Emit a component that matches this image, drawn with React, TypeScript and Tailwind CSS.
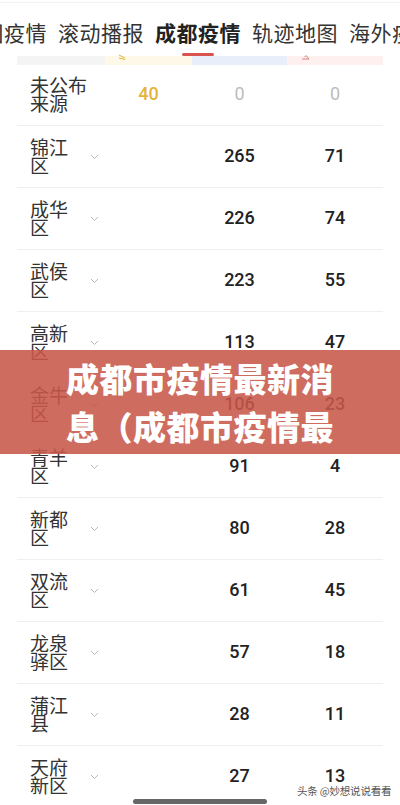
import React from "react";

const rows: { l1: string; l2: string; a?: string; b: string; c: string; chev: boolean }[] = [
  { l1: "未公布", l2: "来源", a: "40", b: "0", c: "0", chev: false },
  { l1: "锦江", l2: "区", b: "265", c: "71", chev: true },
  { l1: "成华", l2: "区", b: "226", c: "74", chev: true },
  { l1: "武侯", l2: "区", b: "223", c: "55", chev: true },
  { l1: "高新", l2: "区", b: "113", c: "47", chev: true },
  { l1: "金牛", l2: "区", b: "106", c: "23", chev: true },
  { l1: "青羊", l2: "区", b: "91", c: "4", chev: true },
  { l1: "新都", l2: "区", b: "80", c: "28", chev: true },
  { l1: "双流", l2: "区", b: "61", c: "45", chev: true },
  { l1: "龙泉", l2: "驿区", b: "57", c: "18", chev: true },
  { l1: "蒲江", l2: "县", b: "28", c: "11", chev: true },
  { l1: "天府", l2: "新区", b: "27", c: "13", chev: true },
];

const cjk = { fontFamily: '"Noto Sans CJK SC", "Noto Sans", sans-serif' };
const num = { fontFamily: 'Roboto, "Noto Sans", sans-serif' };

function Chevron() {
  return (
    <svg width="9" height="6" viewBox="0 0 9 6" fill="none">
      <path d="M1 1l3.5 3.5L8 1" stroke="#b8b8b8" strokeWidth="1" />
    </svg>
  );
}

export default function App() {
  return (
    <div className="relative w-[400px] h-[805px] overflow-hidden bg-white" style={cjk}>
      <div className="h-[2px]" />
      <div className="h-px bg-[#f2f2f2]" />
      {/* tabs */}
      <div className="relative h-[53px] pt-[6px] flex items-center gap-[11px] -ml-[39px] whitespace-nowrap text-[21px] tracking-[0.5px] text-[#333]">
        <span>全国疫情</span>
        <span>滚动播报</span>
        <span className="relative font-bold text-[#222]">
          成都疫情
          <span className="absolute left-[27px] top-[36px] w-[32px] h-[3px] rounded-full bg-[#d9534f]" />
        </span>
        <span>轨迹地图</span>
        <span>海外疫情</span>
      </div>
      {/* header bands */}
      <div className="mx-[17px] flex h-[9px]">
        <div className="w-[88px] bg-[#f4f4f4]" />
        <div className="w-[87px] bg-[#fdf8e8] relative">
          <svg className="absolute left-[13px] -top-[2px]" width="9" height="6" viewBox="0 0 9 6">
            <path d="M1 1l6 3M1 4l6 1.5" stroke="#e0b43a" strokeWidth="1" fill="none" />
          </svg>
        </div>
        <div className="w-[95px] bg-[#e8effb]" />
        <div className="w-[96px] bg-[#fdf0ef] relative">
          <svg className="absolute left-[14px] -top-[2px]" width="9" height="6" viewBox="0 0 9 6">
            <path d="M1 5h7L5 1.5 3.5 3" stroke="#d9837a" strokeWidth="1" fill="none" />
          </svg>
        </div>
      </div>
      {/* rows */}
      <div className="mx-[17px]">
        {rows.map((r, i) => (
          <div
            key={i}
            className={`flex items-center ${i === 0 ? "h-[61px]" : "h-[62px]"} border-b border-[#efefef]`}
          >
            <div className="w-[88px] flex items-center pl-[13px]">
              <div className="w-[60px] text-[19px] leading-[18px] text-[#333] -mt-[2px]">
                <div>{r.l1}</div>
                <div>{r.l2}</div>
              </div>
              {r.chev && <Chevron />}
            </div>
            <div className="w-[87px] text-center text-[18px] font-medium text-[#e3b33e] -mt-[3px]" style={num}>
              {r.a ?? ""}
            </div>
            <div
              className={`w-[95px] text-center text-[18px] -mt-[2px] ${r.a ? "text-[#bdbdbd] -mt-[3px]" : "font-medium text-[#222]"}`}
              style={num}
            >
              {r.b}
            </div>
            <div
              className={`w-[96px] text-center text-[18px] -mt-[2px] ${r.a ? "text-[#bdbdbd] -mt-[3px]" : "font-medium text-[#222]"}`}
              style={num}
            >
              {r.c}
            </div>
          </div>
        ))}
      </div>
      {/* banner overlay */}
      <div className="absolute left-0 top-[350px] w-[400px] h-[104px] bg-[#c8584a]/[0.88] py-[4px] pl-[66px]">
        <div className="w-[274px] h-[96px] overflow-hidden text-white font-black text-[33px] leading-[48px] tracking-[0.5px]">
          成都市疫情最新消息（成都市疫情最新消息今天）
        </div>
      </div>
      {/* watermark */}
      <div
        className="absolute left-[297px] top-[783px] text-[10.5px] tracking-[-0.2px] text-[#555] whitespace-nowrap"
        style={{ textShadow: "0 0 2px #fff, 0 0 2px #fff" }}
      >
        头条 @妙想说说看看
      </div>
      <div className="absolute left-[133px] top-[799px] w-[134px] h-[5px] rounded-full bg-[#666]" />
    </div>
  );
}
